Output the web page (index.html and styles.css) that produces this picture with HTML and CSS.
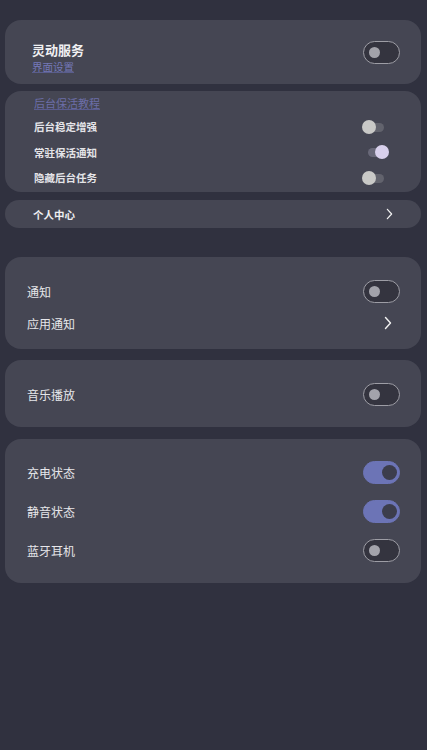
FILE: index.html
```html
<!DOCTYPE html>
<html lang="zh">
<head>
<meta charset="utf-8">
<link rel="stylesheet" href="styles.css">
</head>
<body>
<div class="page">
  <section class="card card-service">
    <div class="service-text">
      <div class="service-title">灵动服务</div>
      <div class="service-link">界面设置</div>
    </div>
    <div class="toggle"><span class="knob"></span></div>
  </section>

  <section class="card card-keep">
    <div class="keep-link">后台保活教程</div>
    <div class="keep-row"><span>后台稳定增强</span><div class="sw"><span class="sw-track"></span><span class="sw-knob"></span></div></div>
    <div class="keep-row"><span>常驻保活通知</span><div class="sw on"><span class="sw-track"></span><span class="sw-knob"></span></div></div>
    <div class="keep-row"><span>隐藏后台任务</span><div class="sw"><span class="sw-track"></span><span class="sw-knob"></span></div></div>
  </section>

  <section class="card card-profile">
    <span>个人中心</span>
    <svg class="chev small" viewBox="0 0 8 14" width="7" height="12"><path d="M1.5 1.5 L6.5 7 L1.5 12.5" fill="none" stroke="#f2f2f2" stroke-width="1.4" stroke-linecap="round" stroke-linejoin="round"/></svg>
  </section>

  <section class="card card-notify">
    <div class="row"><span>通知</span><div class="toggle"><span class="knob"></span></div></div>
    <div class="row"><span>应用通知</span>
      <svg class="chev" viewBox="0 0 8 14" width="8" height="14"><path d="M1.5 1.5 L6.5 7 L1.5 12.5" fill="none" stroke="#f2f2f2" stroke-width="1.4" stroke-linecap="round" stroke-linejoin="round"/></svg>
    </div>
  </section>

  <section class="card card-music">
    <div class="row"><span>音乐播放</span><div class="toggle"><span class="knob"></span></div></div>
  </section>

  <section class="card card-status">
    <div class="row"><span>充电状态</span><div class="toggle on"><span class="knob"></span></div></div>
    <div class="row"><span>静音状态</span><div class="toggle on"><span class="knob"></span></div></div>
    <div class="row"><span>蓝牙耳机</span><div class="toggle"><span class="knob"></span></div></div>
  </section>
</div>
</body>
</html>
```

FILE: styles.css
```css
* { box-sizing: border-box; }
html, body {
  margin: 0;
  padding: 0;
  background: #30313f;
  height: 100%;
}
body {
  font-family: "Noto Sans CJK SC", "Noto Sans", sans-serif;
  color: #e6e6ea;
}
.page {
  padding: 20px 6px 0 5px;
  display: flex;
  flex-direction: column;
  height: 750px;
}
.card {
  background: #454653;
  border-radius: 16px;
  width: 416px;
}
.card-service {
  height: 64px;
  display: flex;
  align-items: center;
  justify-content: space-between;
  padding: 0 21px 0 27px;
}
.service-text { display: flex; flex-direction: column; padding-top: 10px; }
.toggle { margin-top: 0; }
.service-title {
  font-size: 13px;
  font-weight: 700;
  line-height: 18px;
  color: #f0f0f2;
}
.service-link {
  font-size: 10.5px;
  line-height: 15px;
  color: #7478b8;
  text-decoration: underline;
  text-decoration-color: #5a5d8c;
}
.toggle {
  width: 37px;
  height: 23px;
  border: 1.5px solid #9d9da5;
  border-radius: 12px;
  background: #34343f;
  display: flex;
  align-items: center;
  padding-left: 5px;
  flex: none;
}
.toggle .knob {
  width: 11px;
  height: 11px;
  border-radius: 50%;
  background: #a3a3ab;
}
.toggle.on {
  background: #6c74b6;
  border-color: #6c74b6;
  justify-content: flex-end;
  padding: 0 2.5px 0 0;
}
.toggle.on .knob {
  width: 15px;
  height: 15px;
  background: #3c3d4c;
}
.card-keep {
  margin-top: 7px;
  height: 101px;
  padding: 4px 36px 0 29px;
  display: flex;
  flex-direction: column;
}
.keep-link {
  font-size: 11px;
  line-height: 16px;
  color: #6c6ea8;
  text-decoration: underline;
  text-decoration-color: #5a5c8e;
  margin-bottom: 3px;
}
.keep-row {
  height: 25.5px;
  display: flex;
  align-items: center;
  justify-content: space-between;
  font-size: 10.5px;
  font-weight: 700;
  color: #e4e4e8;
}
.sw {
  position: relative;
  width: 23px;
  height: 16px;
  flex: none;
}
.sw-track {
  position: absolute;
  left: 2px;
  top: 4px;
  width: 20px;
  height: 9px;
  border-radius: 5px;
  background: #62636d;
}
.sw-knob {
  position: absolute;
  left: 0;
  top: 1px;
  width: 14px;
  height: 14px;
  border-radius: 50%;
  background: #c9c9c7;
}
.sw.on .sw-knob {
  left: 13px;
  background: #d8d0ec;
}
.sw.on .sw-track {
  left: 6px;
  width: 16px;
  background: #686878;
}
.card-profile {
  margin-top: 8px;
  height: 28px;
  display: flex;
  align-items: center;
  justify-content: space-between;
  padding: 0 28px 0 28px;
  font-size: 10.5px;
  font-weight: 700;
  color: #f0f0f2;
}
.card-notify {
  margin-top: 29px;
  height: 92px;
  padding: 18px 21px 0 22px;
}
.row {
  display: flex;
  align-items: center;
  justify-content: space-between;
  height: 32px;
  font-size: 12px;
  color: #e6e6ea;
}
.row .chev { margin-right: 8px; }
.card-music {
  margin-top: 11px;
  height: 67px;
  padding: 18px 21px 0 22px;
}
.card-status {
  margin-top: 12px;
  height: 144px;
  padding: 14px 21px 0 22px;
}
.card-status .row { height: 39px; }
```
